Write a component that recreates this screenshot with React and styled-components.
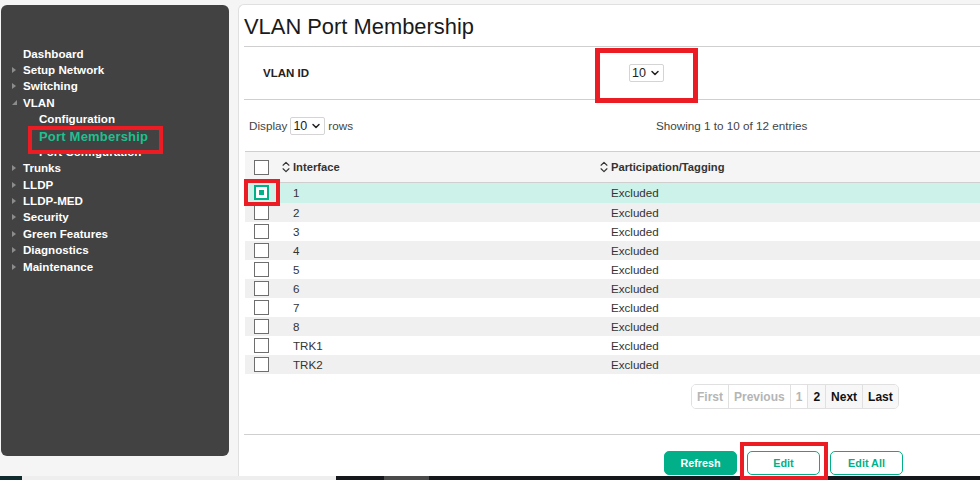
import React from "react";
import styled, { createGlobalStyle } from "styled-components";
import { ChevronDown, ChevronsUpDown } from "lucide-react";

const GREEN = "#01b088";

const NAV = [
  { label: "Dashboard" },
  { label: "Setup Network", arrow: "closed" },
  { label: "Switching", arrow: "closed" },
  { label: "VLAN", arrow: "open" },
  { label: "Configuration", child: true },
  { label: "Port Membership", child: true, active: true },
  { label: "Port Configuration", child: true },
  { label: "Trunks", arrow: "closed" },
  { label: "LLDP", arrow: "closed" },
  { label: "LLDP-MED", arrow: "closed" },
  { label: "Security", arrow: "closed" },
  { label: "Green Features", arrow: "closed" },
  { label: "Diagnostics", arrow: "closed" },
  { label: "Maintenance", arrow: "closed" },
];

const PORTS = ["1", "2", "3", "4", "5", "6", "7", "8", "TRK1", "TRK2"];

const App = () => {
  return (
    <>
      <GlobalStyle />
      <Page>
        <Content>
          <Sidebar>
            {NAV.map((item) => (
              <NavItem key={item.label} $child={item.child} $active={item.active}>
                {item.arrow && <NavArrow $open={item.arrow === "open"} />}
                {item.label}
                {item.active && <Callout $inset="-1px -15px -10px -11px" $width={4} $behind />}
              </NavItem>
            ))}
          </Sidebar>

          <Main>
            <Title>VLAN Port Membership</Title>
            <VlanRow>
              <VlanLabel>VLAN ID</VlanLabel>
              <Select $width={35}>
                10 <ChevronDown size={12} strokeWidth={3} />
                <Callout $inset="-17px -35px -22px -35px" $width={5} />
              </Select>
            </VlanRow>

            <DisplayRow>
              <RowsControl>
                Display
                <Select $width={35}>
                  10 <ChevronDown size={12} strokeWidth={3} />
                </Select>
                rows
              </RowsControl>
              <Entries>Showing 1 to 10 of 12 entries</Entries>
            </DisplayRow>

            <Table>
              <HeadRow>
                <CheckCell>
                  <Checkbox />
                </CheckCell>
                <HeadCell>
                  <ChevronsUpDown size={14} strokeWidth={2} />
                  Interface
                </HeadCell>
                <HeadCell>
                  <ChevronsUpDown size={14} strokeWidth={2} />
                  Participation/Tagging
                </HeadCell>
              </HeadRow>
              {PORTS.map((port, i) => (
                <PortRow key={port} $index={i}>
                  <CheckCell>
                    <Checkbox $checked={i === 0} />
                    {i === 0 && <Callout $inset="-4px -1px -4px -1px" $width={4} />}
                  </CheckCell>
                  <BodyCell>{port}</BodyCell>
                  <BodyCell>Excluded</BodyCell>
                </PortRow>
              ))}
            </Table>

            <Pagination>
              <PageLink $disabled>First</PageLink>
              <PageLink $disabled>Previous</PageLink>
              <PageLink $disabled>1</PageLink>
              <PageLink>2</PageLink>
              <PageLink>Next</PageLink>
              <PageLink>Last</PageLink>
            </Pagination>

            <Actions>
              <ActionButton $filled>Refresh</ActionButton>
              <ActionButton>
                Edit
                <Callout $inset="-10px -9px -6px -8px" $width={4} />
              </ActionButton>
              <ActionButton>Edit All</ActionButton>
            </Actions>
          </Main>
        </Content>

        <Taskbar>
          <TaskSegment $width={22} $color="#0f2b2e" />
          <TaskSegment $width={314} $color="#eeeeee" />
          <TaskSegment $width={48} $color="#14181c" />
          <TaskSegment $width={45} $color="#4a4a4a" />
          <TaskSegment $color="#14181c" />
        </Taskbar>
      </Page>
    </>
  );
};

export default App;

const GlobalStyle = createGlobalStyle`
  html, body {
    margin: 0;
    background: #f5f5f5;
    font-family: "Liberation Sans", Arial, sans-serif;
    overflow: hidden;
  }
`;

const Page = styled.div`
  width: 980px;
  height: 480px;
  display: flex;
  flex-direction: column;
  overflow: hidden;
`;

const Content = styled.div`
  flex: 1;
  min-height: 0;
  display: flex;
  align-items: flex-start;
`;

const Sidebar = styled.nav`
  box-sizing: border-box;
  width: 228px;
  height: 451px;
  margin: 5px 9px 0 1px;
  padding-top: 40.5px;
  background: #424242;
  border-radius: 6px;
`;

const NavItem = styled.div`
  position: relative;
  width: max-content;
  height: 16.4px;
  line-height: 16.4px;
  margin-left: ${(p) => (p.$child ? "38px" : "22px")};
  font-size: 11.6px;
  font-weight: 700;
  color: ${(p) => (p.$active ? "#1fbf8f" : "#ffffff")};
  ${(p) => p.$active && "z-index: 1; font-size: 13px; line-height: 19px; letter-spacing: 0.2px;"}
`;

const NavArrow = styled.span`
  position: absolute;
  top: 5px;
  left: -11px;
  width: 0;
  height: 0;
  ${(p) =>
    p.$open
      ? "border-bottom: 5px solid #8c8c8c; border-left: 5px solid transparent;"
      : "border-left: 4px solid #8c8c8c; border-top: 3.5px solid transparent; border-bottom: 3.5px solid transparent;"}
`;

const Callout = styled.span`
  position: absolute;
  inset: ${(p) => p.$inset};
  z-index: ${(p) => (p.$behind ? -1 : 2)};
  border: ${(p) => p.$width}px solid #ec1c24;
  background: ${(p) => (p.$behind ? "#424242" : "transparent")};
  pointer-events: none;
`;

const Main = styled.main`
  box-sizing: border-box;
  flex: 1;
  height: 472px;
  margin-top: 4px;
  padding: 0 0 0 5px;
  background: #ffffff;
  border: 1px solid #e0e0e0;
  border-right: 0;
  border-bottom: 0;
  border-top-left-radius: 6px;
`;

const Title = styled.h1`
  margin: 0;
  height: 41px;
  line-height: 44px;
  font-size: 21.9px;
  font-weight: 400;
  color: #1a1a1a;
  border-bottom: 1px solid #cfcfcf;
`;

const VlanRow = styled.div`
  display: flex;
  align-items: center;
  height: 52px;
  padding-left: 19px;
  border-bottom: 1px solid #cfcfcf;
`;

const VlanLabel = styled.div`
  width: 366px;
  font-size: 11.5px;
  font-weight: 700;
  color: #222222;
`;

const Select = styled.div`
  position: relative;
  box-sizing: border-box;
  width: ${(p) => p.$width}px;
  height: 18px;
  display: inline-flex;
  align-items: center;
  justify-content: center;
  gap: 3px;
  font-size: 12.5px;
  color: #222222;
  border: 1px solid #d4d4d4;
  border-radius: 2px;
`;

const DisplayRow = styled.div`
  display: flex;
  align-items: center;
  height: 51px;
  padding-left: 5px;
`;

const RowsControl = styled.div`
  display: flex;
  align-items: center;
  gap: 3px;
  width: 407px;
  font-size: 11.7px;
  color: #444444;
`;

const Entries = styled.div`
  font-size: 11.7px;
  color: #444444;
`;

const Table = styled.div`
  margin-left: 1px;
`;

const gridColumns = "34px 318px 1fr";

const HeadRow = styled.div`
  box-sizing: border-box;
  display: grid;
  grid-template-columns: ${gridColumns};
  align-items: center;
  height: 32px;
  background: #f5f5f5;
  border-top: 1px solid #cfcfcf;
  border-bottom: 1px solid #cfcfcf;
`;

const PortRow = styled.div`
  box-sizing: border-box;
  display: grid;
  grid-template-columns: ${gridColumns};
  align-items: center;
  height: ${(p) => (p.$index === 0 ? "20px" : "19px")};
  padding-bottom: 1px;
  background: ${(p) =>
    p.$index === 0 ? "#cdf2ea" : p.$index % 2 ? "#f0f0f0" : "#ffffff"};
  font-size: 11.6px;
  color: #333333;
`;

const CheckCell = styled.div`
  position: relative;
  display: flex;
  align-self: stretch;
  align-items: center;
  padding-left: 9px;
`;

const Checkbox = styled.span`
  position: relative;
  box-sizing: border-box;
  width: 15px;
  height: 15px;
  border: ${(p) => (p.$checked ? `2px solid ${GREEN}` : "1.5px solid #6e6e6e")};
  background: #ffffff;

  ${(p) =>
    p.$checked &&
    `&::after {
      content: "";
      position: absolute;
      top: 3px;
      left: 3px;
      width: 5px;
      height: 5px;
      background: ${GREEN};
    }`}
`;

const HeadCell = styled.div`
  display: flex;
  align-items: center;
  font-size: 11.2px;
  font-weight: 700;
  color: #333333;
`;

const BodyCell = styled.div`
  padding-left: 14px;
`;

const Pagination = styled.div`
  box-sizing: border-box;
  display: flex;
  width: max-content;
  margin: 10px 0 0 447px;
  height: 25px;
  border: 1px solid #e0e0e0;
  border-radius: 5px;
  overflow: hidden;
`;

const PageLink = styled.div`
  display: flex;
  align-items: center;
  padding: 0 5px;
  font-size: 12px;
  font-weight: 700;
  color: ${(p) => (p.$disabled ? "#b5b5b5" : "#111111")};
  background: ${(p) => (p.$disabled ? "#ffffff" : "#f7f7f7")};

  & + & {
    border-left: 1px solid #e0e0e0;
  }
`;

const Actions = styled.div`
  display: flex;
  gap: 10px;
  margin-top: 25px;
  padding: 16px 0 0 420px;
  border-top: 1px solid #cfcfcf;
`;

const ActionButton = styled.div`
  position: relative;
  box-sizing: border-box;
  width: 73px;
  height: 24px;
  display: flex;
  align-items: center;
  justify-content: center;
  font-size: 10.8px;
  font-weight: 700;
  border-radius: 5px;
  border: 1px solid ${GREEN};
  color: ${(p) => (p.$filled ? "#ffffff" : GREEN)};
  background: ${(p) => (p.$filled ? GREEN : "#ffffff")};
`;

const Taskbar = styled.div`
  flex: none;
  height: 4px;
  display: flex;
`;

const TaskSegment = styled.div`
  ${(p) => (p.$width ? `width: ${p.$width}px;` : "flex: 1;")}
  background: ${(p) => p.$color};
`;
